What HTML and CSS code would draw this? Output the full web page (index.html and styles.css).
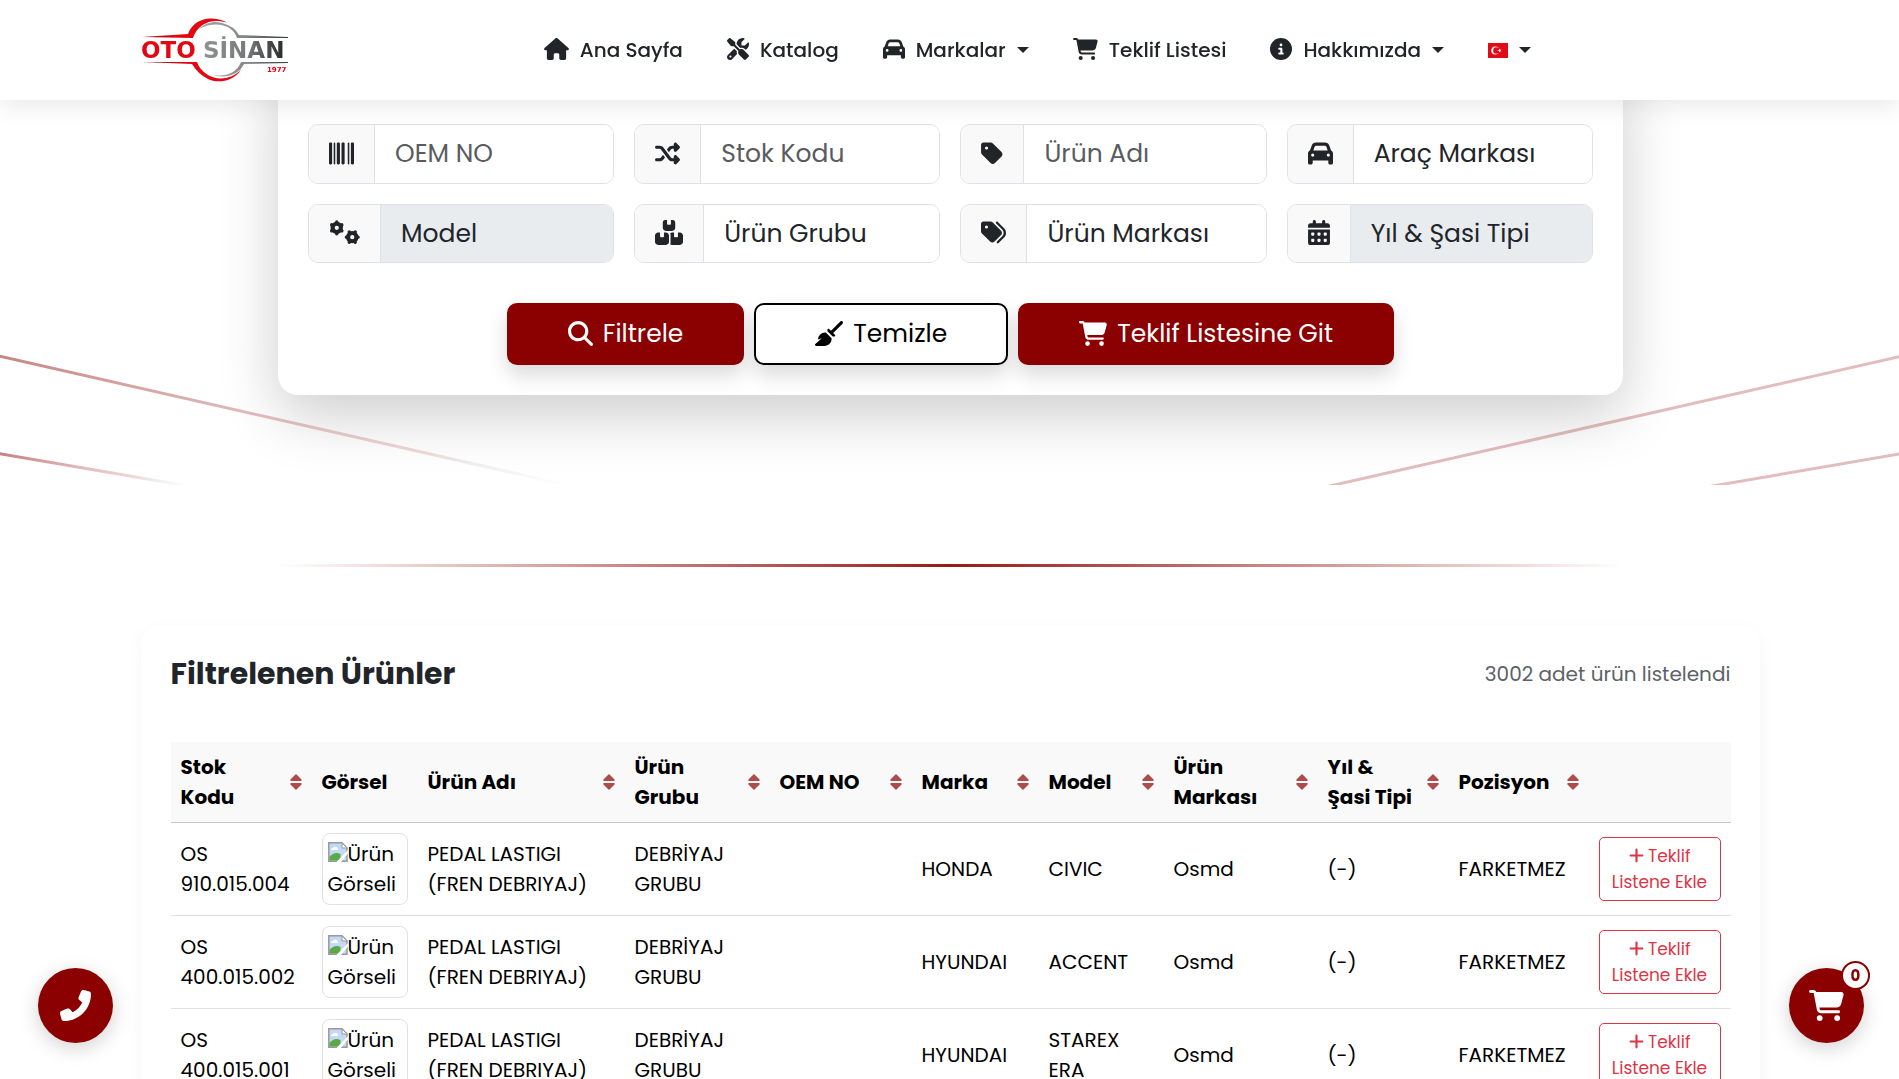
FILE: index.html
```html
<!DOCTYPE html>
<html lang="tr">
<head>
<meta charset="utf-8">
<meta name="viewport" content="width=device-width, initial-scale=1">
<title>Oto Sinan</title>
<link rel="stylesheet" href="styles.css">
</head>
<body>
<svg class="sprite" aria-hidden="true">
  <symbol id="house" viewBox="0 0 576 512"><path d="M575.8 255.5c0 18-15 32.1-32 32.1l-32 0 .7 160.2c0 2.7-.2 5.4-.5 8.1l0 16.2c0 22.1-17.9 40-40 40l-16 0c-1.1 0-2.2 0-3.3-.1c-1.4 .1-2.8 .1-4.2 .1L416 512l-24 0c-22.1 0-40-17.9-40-40l0-24 0-64c0-17.7-14.3-32-32-32l-64 0c-17.7 0-32 14.3-32 32l0 64 0 24c0 22.1-17.9 40-40 40l-24 0-31.9 0c-1.5 0-3-.1-4.5-.2c-1.2 .1-2.4 .2-3.6 .2l-16 0c-22.1 0-40-17.9-40-40l0-112c0-.9 0-1.9 .1-2.8l0-69.7-32 0c-18 0-32-14-32-32.1c0-9 3-17 10-24L266.4 8c7-7 15-8 22-8s15 2 21 7L564.8 231.5c8 7 12 15 11 24z"/></symbol>
  <symbol id="tools" viewBox="0 0 512 512"><path d="M78.6 5C69.1-2.4 55.6-1.5 47 7L7 47c-8.5 8.5-9.4 22-2.1 31.6l80 104c4.5 5.9 11.6 9.4 19 9.4l54.1 0 109 109c-14.7 29-10 65.4 14.3 89.6l112 112c12.5 12.5 32.8 12.5 45.3 0l64-64c12.5-12.5 12.5-32.8 0-45.3l-112-112c-24.2-24.2-60.6-29-89.6-14.3l-109-109 0-54.1c0-7.5-3.5-14.5-9.4-19L78.6 5zM19.9 396.1C7.2 408.8 0 426.1 0 444.1C0 481.6 30.4 512 67.9 512c18 0 35.3-7.2 48-19.9L233.7 374.3c-7.8-20.9-9-43.6-3.6-65.1l-61.7-61.7L19.9 396.1zM512 144c0-10.5-1.1-20.7-3.2-30.5c-2.4-11.2-16.1-14.1-24.2-6l-63.9 63.9c-3 3-7.1 4.7-11.3 4.7L352 176c-8.8 0-16-7.2-16-16l0-57.4c0-4.2 1.7-8.3 4.7-11.3l63.9-63.9c8.1-8.1 5.2-21.8-6-24.2C388.7 1.1 378.5 0 368 0C288.5 0 224 64.5 224 144l0 .8 85.3 85.3c36-9.1 75.8 .5 104 28.7L429 274.5c49-23 83-72.8 83-130.5zM56 432a24 24 0 1 1 48 0 24 24 0 1 1 -48 0z"/></symbol>
  <symbol id="car" viewBox="0 0 512 512"><path d="M135.2 117.4L109.1 192l293.8 0-26.1-74.6C372.3 104.6 360.2 96 346.6 96L165.4 96c-13.6 0-25.7 8.6-30.2 21.4zM39.6 196.8L74.8 96.3C88.3 57.8 124.6 32 165.4 32l181.2 0c40.8 0 77.1 25.8 90.6 64.3l35.2 100.5c23.2 9.6 39.6 32.5 39.6 59.2l0 144 0 48c0 17.7-14.3 32-32 32l-32 0c-17.7 0-32-14.3-32-32l0-48L96 400l0 48c0 17.7-14.3 32-32 32l-32 0c-17.7 0-32-14.3-32-32l0-48L0 256c0-26.7 16.4-49.6 39.6-59.2zM128 288a32 32 0 1 0 -64 0 32 32 0 1 0 64 0zm288 32a32 32 0 1 0 0-64 32 32 0 1 0 0 64z"/></symbol>
  <symbol id="cart" viewBox="0 0 576 512"><path d="M0 24C0 10.7 10.7 0 24 0L69.5 0c22 0 41.5 12.8 50.6 32l411 0c26.3 0 45.5 25 38.6 50.4l-41 152.3c-8.5 31.4-37 53.3-69.5 53.3l-288.5 0 5.4 28.5c2.2 11.3 12.1 19.5 23.6 19.5L488 336c13.3 0 24 10.7 24 24s-10.7 24-24 24l-288.3 0c-34.6 0-64.3-24.6-70.7-58.5L77.4 54.5c-.7-3.8-4-6.5-7.9-6.5L24 48C10.7 48 0 37.3 0 24zM128 464a48 48 0 1 1 96 0 48 48 0 1 1 -96 0zm336-48a48 48 0 1 1 0 96 48 48 0 1 1 0-96z"/></symbol>
  <symbol id="info" viewBox="0 0 512 512"><path d="M256 512A256 256 0 1 0 256 0a256 256 0 1 0 0 512zM216 336l24 0 0-64-24 0c-13.3 0-24-10.7-24-24s10.7-24 24-24l48 0c13.3 0 24 10.7 24 24l0 88 8 0c13.3 0 24 10.7 24 24s-10.7 24-24 24l-80 0c-13.3 0-24-10.7-24-24s10.7-24 24-24zm40-208a32 32 0 1 1 0 64 32 32 0 1 1 0-64z"/></symbol>
  <symbol id="barcode" viewBox="0 0 512 512"><path d="M24 32C10.7 32 0 42.7 0 56L0 456c0 13.3 10.7 24 24 24l16 0c13.3 0 24-10.7 24-24L64 56c0-13.3-10.7-24-24-24L24 32zm88 0c-8.8 0-16 7.2-16 16l0 416c0 8.8 7.2 16 16 16s16-7.2 16-16l0-416c0-8.8-7.2-16-16-16zm72 0c-13.3 0-24 10.7-24 24l0 400c0 13.3 10.7 24 24 24l16 0c13.3 0 24-10.7 24-24l0-400c0-13.3-10.7-24-24-24l-16 0zm96 0c-13.3 0-24 10.7-24 24l0 400c0 13.3 10.7 24 24 24l16 0c13.3 0 24-10.7 24-24l0-400c0-13.3-10.7-24-24-24l-16 0zM448 56l0 400c0 13.3 10.7 24 24 24l16 0c13.3 0 24-10.7 24-24l0-400c0-13.3-10.7-24-24-24l-16 0c-13.3 0-24 10.7-24 24zm-64-8l0 416c0 8.8 7.2 16 16 16s16-7.2 16-16l0-416c0-8.8-7.2-16-16-16s-16 7.2-16 16z"/></symbol>
  <symbol id="shuffle" viewBox="0 0 512 512"><path d="M403.8 34.4c12-5 25.7-2.2 34.9 6.9l64 64c6 6 9.4 14.1 9.4 22.6s-3.4 16.6-9.4 22.6l-64 64c-9.2 9.2-22.9 11.9-34.9 6.9s-19.8-16.6-19.8-29.6l0-32-32 0c-10.1 0-19.6 4.7-25.6 12.8L284 229.3 244 176l31.2-41.6C293.3 110.2 321.8 96 352 96l32 0 0-32c0-12.9 7.8-24.6 19.8-29.6zM164 282.7L204 336l-31.2 41.6C154.7 401.8 126.2 416 96 416l-64 0c-17.7 0-32-14.3-32-32s14.3-32 32-32l64 0c10.1 0 19.6-4.7 25.6-12.8L164 282.7zm274.6 188c-9.2 9.2-22.9 11.9-34.9 6.9s-19.8-16.6-19.8-29.6l0-32-32 0c-30.2 0-58.7-14.2-76.8-38.4L121.6 172.8c-6-8.1-15.5-12.8-25.6-12.8l-64 0c-17.7 0-32-14.3-32-32s14.3-32 32-32l64 0c30.2 0 58.7 14.2 76.8 38.4L326.4 339.2c6 8.1 15.5 12.8 25.6 12.8l32 0 0-32c0-12.9 7.8-24.6 19.8-29.6s25.7-2.2 34.9 6.9l64 64c6 6 9.4 14.1 9.4 22.6s-3.4 16.6-9.4 22.6l-64 64z"/></symbol>
  <symbol id="tag" viewBox="0 0 448 512"><path d="M0 80L0 229.5c0 17 6.7 33.3 18.7 45.3l176 176c25 25 65.5 25 90.5 0L418.7 317.3c25-25 25-65.5 0-90.5l-176-176c-12-12-28.3-18.7-45.3-18.7L48 32C21.5 32 0 53.5 0 80zm112 32a32 32 0 1 1 0 64 32 32 0 1 1 0-64z"/></symbol>
  <symbol id="tags" viewBox="0 0 512 512"><path d="M345 39.1L472.8 168.4c52.4 53 52.4 138.2 0 191.2L360.8 472.9c-9.3 9.4-24.5 9.5-33.9 .2s-9.5-24.5-.2-33.9L438.6 325.9c33.9-34.3 33.9-89.4 0-123.7L310.9 72.9c-9.3-9.4-9.2-24.6 .2-33.9s24.6-9.2 33.9 .2zM0 229.5L0 80C0 53.5 21.5 32 48 32l149.5 0c17 0 33.3 6.7 45.3 18.7l168 168c25 25 25 65.5 0 90.5L277.3 442.7c-25 25-65.5 25-90.5 0l-168-168C6.7 262.7 0 246.5 0 229.5zM144 144a32 32 0 1 0 -64 0 32 32 0 1 0 64 0z"/></symbol>
  <symbol id="gears" viewBox="0 0 640 512"><g fill="none" stroke="currentColor" stroke-linecap="round"><circle cx="160" cy="160" r="86" stroke-width="84"/><path stroke-width="70" d="M160 62V39M160 258v23M245 111l20-12M75 209l-20 12M75 111l-20-12M245 209l20 12"/><circle cx="480" cy="352" r="86" stroke-width="84"/><path stroke-width="70" d="M578 352h23M382 352h-23M529 267l12-20M431 437l-12 20M431 267l-12-20M529 437l12 20"/></g></symbol>
  <symbol id="boxes" viewBox="0 0 576 512"><path d="M248 0L208 0c-26.5 0-48 21.5-48 48l0 112c0 35.3 28.7 64 64 64l128 0c35.3 0 64-28.7 64-64l0-112c0-26.5-21.5-48-48-48L328 0l0 80c0 8.8-7.2 16-16 16l-48 0c-8.8 0-16-7.2-16-16l0-80zM64 256c-35.3 0-64 28.7-64 64L0 448c0 35.3 28.7 64 64 64l160 0c35.3 0 64-28.7 64-64l0-128c0-35.3-28.7-64-64-64l-40 0 0 80c0 8.8-7.2 16-16 16l-48 0c-8.8 0-16-7.2-16-16l0-80-40 0zM352 512l160 0c35.3 0 64-28.7 64-64l0-128c0-35.3-28.7-64-64-64l-40 0 0 80c0 8.8-7.2 16-16 16l-48 0c-8.8 0-16-7.2-16-16l0-80-40 0c-15 0-28.8 5.1-39.7 13.8c4.9 10.4 7.7 22 7.7 34.2l0 160c0 12.2-2.8 23.8-7.7 34.2C323.2 506.9 337 512 352 512z"/></symbol>
  <symbol id="calendar" viewBox="0 0 448 512"><path fill-rule="evenodd" d="M128 0c17.7 0 32 14.3 32 32l0 32 128 0 0-32c0-17.7 14.3-32 32-32s32 14.3 32 32l0 32 48 0c26.5 0 48 21.5 48 48l0 48L0 160l0-48C0 85.5 21.5 64 48 64l48 0 0-32c0-17.7 14.3-32 32-32zM0 192l448 0 0 272c0 26.5-21.5 48-48 48L48 512c-26.5 0-48-21.5-48-48zM80 256q-16 0-16 16v32q0 16 16 16h32q16 0 16-16v-32q0-16-16-16zM208 256q-16 0-16 16v32q0 16 16 16h32q16 0 16-16v-32q0-16-16-16zM336 256q-16 0-16 16v32q0 16 16 16h32q16 0 16-16v-32q0-16-16-16zM80 384q-16 0-16 16v32q0 16 16 16h32q16 0 16-16v-32q0-16-16-16zM208 384q-16 0-16 16v32q0 16 16 16h32q16 0 16-16v-32q0-16-16-16zM336 384q-16 0-16 16v32q0 16 16 16h32q16 0 16-16v-32q0-16-16-16z"/></symbol>
  <symbol id="search" viewBox="0 0 512 512"><path d="M416 208c0 45.9-14.9 88.3-40 122.7L502.6 457.4c12.5 12.5 12.5 32.8 0 45.3s-32.8 12.5-45.3 0L330.7 376c-34.4 25.2-76.8 40-122.7 40C93.1 416 0 322.9 0 208S93.1 0 208 0S416 93.1 416 208zM208 352a144 144 0 1 0 0-288 144 144 0 1 0 0 288z"/></symbol>
  <symbol id="broom" viewBox="0 0 576 512"><path d="M566.6 54.6c12.5-12.5 12.5-32.8 0-45.3s-32.8-12.5-45.3 0l-192 192-34.7-34.7c-4.2-4.2-10-6.6-16-6.6c-12.5 0-22.6 10.1-22.6 22.6l0 29.1L364.3 320l29.1 0c12.5 0 22.6-10.1 22.6-22.6c0-6-2.4-11.8-6.6-16l-34.7-34.7 192-192zM341.1 353.4L222.6 234.9c-42.7-3.7-85.2 11.7-115.8 42.3l-8 8C76.5 307.5 64 337.7 64 369.2c0 6.8 7.1 11.2 13.2 8.2l51.1-25.5c5-2.5 9.5 4.1 5.4 7.9L7.3 473.4C2.7 477.6 0 483.6 0 489.9C0 502.1 9.9 512 22.1 512l173.3 0c38.8 0 75.9-15.4 103.4-42.8c30.6-30.6 45.9-73.1 42.3-115.8z"/></symbol>
  <symbol id="plus" viewBox="0 0 448 512"><path d="M256 80c0-17.7-14.3-32-32-32s-32 14.3-32 32l0 144L48 224c-17.7 0-32 14.3-32 32s14.3 32 32 32l144 0 0 144c0 17.7 14.3 32 32 32s32-14.3 32-32l0-144 144 0c17.7 0 32-14.3 32-32s-14.3-32-32-32l-144 0 0-144z"/></symbol>
  <symbol id="phone" viewBox="0 0 512 512"><path transform="matrix(-1 0 0 1 512 0)" d="M164.9 24.6c-7.7-18.6-28-28.5-47.4-23.2l-88 24C12.1 30.2 0 46 0 64C0 311.4 200.6 512 448 512c18 0 33.8-12.1 38.6-29.5l24-88c5.3-19.4-4.6-39.7-23.2-47.4l-96-40c-16.3-6.8-35.2-2.1-46.3 11.6L304.7 368C234.3 334.7 177.3 277.7 144 207.3L193.3 167c13.7-11.2 18.4-30 11.6-46.3l-40-96z"/></symbol>
  <symbol id="sort" viewBox="0 0 12 16"><path d="M6 0L11.6 5.6Q12 7 11 7H1Q0 7 .4 5.6ZM6 16L11.6 10.4Q12 9 11 9H1Q0 9 .4 10.4Z"/></symbol>
  <symbol id="broken" viewBox="0 0 20 20"><path fill="#c3d9f7" stroke="#9a9a9a" stroke-width="1.5" d="M.8.8H14L19 6V19.2H.8Z"/><path fill="#fff" stroke="#9a9a9a" d="M14 1V6H19Z"/><path fill="#fff" d="M3 8q0-2 2-2 1-2 3-1 2 0 2 3Z"/><path fill="#5aa846" d="M1.5 18.5V15q5-6 11-3v6.5Z"/><path fill="#fff" d="M8 20.5 20.5 7.5V11L12.5 20.5Z"/></symbol>
</svg>

<header class="topbar">
  <div class="topbar-inner">
    <a class="logo" href="#" aria-label="Oto Sinan">
      <svg viewBox="0 0 150 66" width="150" height="66">
        <defs>
          <linearGradient id="lg-red"><stop offset="0" stop-color="#8a1018"/><stop offset=".4" stop-color="#e30613"/></linearGradient>
          <linearGradient id="lg-grey"><stop offset="0" stop-color="#a5a7a8"/><stop offset=".5" stop-color="#858788"/><stop offset="1" stop-color="#3b3e40"/></linearGradient>
          <linearGradient id="lg-name"><stop offset="0" stop-color="#8f9192"/><stop offset=".55" stop-color="#77797b"/><stop offset="1" stop-color="#26292b"/></linearGradient>
        </defs>
        <path fill="url(#lg-red)" d="M1 20 47 17C51 6 61 1 71 1.500Q80 2 86 5.500C71 1 57 6 52 21Z"/>
        <path fill="url(#lg-grey)" d="M58 12C65 5 74 4 81 6Q93 9 98 18L147 20V21H96C92 8 75 3 58 12Z"/>
        <path fill="url(#lg-red)" d="M1 45H56C61 60 83 69 100 53 91 66 75 66 67 62Q57 57 51 47Z"/>
        <path fill="url(#lg-grey)" d="M147 45H100C95 57 83 61 68 57 81 62 97 60 103 47L147 46Z"/>
        <g font-family="DejaVu Sans" font-weight="bold">
          <text x="0" y="41" font-size="23" fill="#e30613">OTO</text>
          <text x="62" y="41" font-size="23" fill="url(#lg-name)">SİNAN</text>
          <text x="126" y="55" font-size="7" fill="#e30613">1977</text>
        </g>
      </svg>
    </a>
    <nav class="menu" aria-label="Ana menü">
      <a href="#"><svg class="i20 w9"><use href="#house"/></svg>Ana Sayfa</a>
      <a href="#"><svg class="i20"><use href="#tools"/></svg>Katalog</a>
      <a href="#" class="drop"><svg class="i20"><use href="#car"/></svg>Markalar</a>
      <a href="#"><svg class="i20 w9"><use href="#cart"/></svg>Teklif Listesi</a>
      <a href="#" class="drop"><svg class="i20"><use href="#info"/></svg>Hakkımızda</a>
      <a href="#" class="drop" aria-label="Türkçe"><svg class="flag" viewBox="0 0 20 15"><path fill="#e30a17" d="M0 0h20v15H0z"/><circle cx="7.3" cy="7.5" r="4" fill="#fff"/><circle cx="8.4" cy="7.5" r="3.2" fill="#e30a17"/><path fill="#fff" d="m9.300 7.500 1.700-.5.1-1.400 1 1.100 1.300-.4-.7 1.200.7 1.200-1.300-.4-1 1.100-.1-1.400z"/></svg></a>
    </nav>
  </div>
</header>

<main>
  <section class="hero">
    <svg class="rays" viewBox="0 0 1899 130" preserveAspectRatio="none" aria-hidden="true">
      <defs>
        <linearGradient id="ray-a" gradientUnits="userSpaceOnUse" x1="0" y1="0" x2="565" y2="0"><stop offset="0" stop-color="#8b0000" stop-opacity=".48"/><stop offset=".75" stop-color="#b04040" stop-opacity=".2"/><stop offset=".82" stop-color="#777" stop-opacity=".14"/><stop offset="1" stop-color="#888" stop-opacity="0"/></linearGradient>
        <linearGradient id="ray-b" gradientUnits="userSpaceOnUse" x1="0" y1="0" x2="190" y2="0"><stop offset="0" stop-color="#8b0000" stop-opacity=".5"/><stop offset=".72" stop-color="#b04040" stop-opacity=".2"/><stop offset=".8" stop-color="#777" stop-opacity=".14"/><stop offset="1" stop-color="#888" stop-opacity="0"/></linearGradient>
      </defs>
      <g fill="none" stroke-width="3">
        <path stroke="url(#ray-a)" d="M-10-1 580 133"/>
        <path stroke="url(#ray-b)" d="M-10 97 200 133"/>
        <path stroke="#8b0000" stroke-opacity=".26" d="M1911-1 1321 133M1911 97 1701 133"/>
      </g>
    </svg>
    <form class="search-card">
      <div class="fields">
        <div class="field"><label for="oem" aria-label="OEM NO"><svg class="i25"><use href="#barcode"/></svg></label><input id="oem" type="text" placeholder="OEM NO"></div>
        <div class="field"><label for="stok" aria-label="Stok Kodu"><svg class="i25"><use href="#shuffle"/></svg></label><input id="stok" type="text" placeholder="Stok Kodu"></div>
        <div class="field"><label for="ad" aria-label="Ürün Adı"><svg class="i25 w7"><use href="#tag"/></svg></label><input id="ad" type="text" placeholder="Ürün Adı"></div>
        <div class="field"><label for="arac" aria-label="Araç Markası"><svg class="i25"><use href="#car"/></svg></label><select id="arac"><option>Araç Markası</option></select></div>
        <div class="field"><label for="model" aria-label="Model"><svg class="i25 w10"><use href="#gears"/></svg></label><select id="model" disabled><option>Model</option></select></div>
        <div class="field"><label for="grup" aria-label="Ürün Grubu"><svg class="i25 w9"><use href="#boxes"/></svg></label><select id="grup"><option>Ürün Grubu</option></select></div>
        <div class="field"><label for="marka" aria-label="Ürün Markası"><svg class="i25"><use href="#tags"/></svg></label><select id="marka"><option>Ürün Markası</option></select></div>
        <div class="field"><label for="yil" aria-label="Yıl &amp; Şasi Tipi"><svg class="i25 w7"><use href="#calendar"/></svg></label><select id="yil" disabled><option>Yıl &amp; Şasi Tipi</option></select></div>
      </div>
      <div class="actions">
        <button type="submit" class="btn red"><svg class="i25"><use href="#search"/></svg>Filtrele</button>
        <button type="reset" class="btn plain"><svg class="i25 w9"><use href="#broom"/></svg>Temizle</button>
        <a href="#" class="btn red"><svg class="i25 w9"><use href="#cart"/></svg>Teklif Listesine Git</a>
      </div>
    </form>
  </section>

  <hr class="divider">

  <section class="results">
    <div class="results-head">
      <h2>Filtrelenen Ürünler</h2>
      <p>3002 adet ürün listelendi</p>
    </div>
    <table>
      <colgroup><col class="c-stok"><col class="c-img"><col class="c-ad"><col class="c-grup"><col class="c-oem"><col class="c-marka"><col class="c-model"><col class="c-umarka"><col class="c-yil"><col class="c-poz"><col class="c-btn"></colgroup>
      <thead>
        <tr>
          <th><div>Stok<br>Kodu<svg class="sort"><use href="#sort"/></svg></div></th>
          <th><div>Görsel</div></th>
          <th><div>Ürün Adı<svg class="sort"><use href="#sort"/></svg></div></th>
          <th><div>Ürün<br>Grubu<svg class="sort"><use href="#sort"/></svg></div></th>
          <th><div>OEM NO<svg class="sort"><use href="#sort"/></svg></div></th>
          <th><div>Marka<svg class="sort"><use href="#sort"/></svg></div></th>
          <th><div>Model<svg class="sort"><use href="#sort"/></svg></div></th>
          <th><div>Ürün<br>Markası<svg class="sort"><use href="#sort"/></svg></div></th>
          <th><div>Yıl &amp;<br>Şasi Tipi<svg class="sort"><use href="#sort"/></svg></div></th>
          <th><div>Pozisyon<svg class="sort"><use href="#sort"/></svg></div></th>
          <th></th>
        </tr>
      </thead>
      <tbody>
        <tr>
          <td>OS<br>910.015.004</td>
          <td><div class="thumb"><svg><use href="#broken"/></svg>Ürün Görseli</div></td>
          <td>PEDAL LASTIGI<br>(FREN DEBRIYAJ)</td>
          <td>DEBRİYAJ GRUBU</td><td></td><td>HONDA</td><td>CIVIC</td><td>Osmd</td><td>(-)</td><td>FARKETMEZ</td>
          <td><button type="button" class="add"><svg><use href="#plus"/></svg> Teklif<br>Listene Ekle</button></td>
        </tr>
        <tr>
          <td>OS<br>400.015.002</td>
          <td><div class="thumb"><svg><use href="#broken"/></svg>Ürün Görseli</div></td>
          <td>PEDAL LASTIGI<br>(FREN DEBRIYAJ)</td>
          <td>DEBRİYAJ GRUBU</td><td></td><td>HYUNDAI</td><td>ACCENT</td><td>Osmd</td><td>(-)</td><td>FARKETMEZ</td>
          <td><button type="button" class="add"><svg><use href="#plus"/></svg> Teklif<br>Listene Ekle</button></td>
        </tr>
        <tr>
          <td>OS<br>400.015.001</td>
          <td><div class="thumb"><svg><use href="#broken"/></svg>Ürün Görseli</div></td>
          <td>PEDAL LASTIGI<br>(FREN DEBRIYAJ)</td>
          <td>DEBRİYAJ GRUBU</td><td></td><td>HYUNDAI</td><td>STAREX ERA</td><td>Osmd</td><td>(-)</td><td>FARKETMEZ</td>
          <td><button type="button" class="add"><svg><use href="#plus"/></svg> Teklif<br>Listene Ekle</button></td>
        </tr>
      </tbody>
    </table>
  </section>
</main>

<a href="#" class="fab call" aria-label="Ara"><svg><use href="#phone"/></svg></a>
<a href="#" class="fab basket" aria-label="Teklif Listesi"><svg><use href="#cart"/></svg><span class="badge">0</span></a>
</body>
</html>
```
FILE: styles.css
```css
* { box-sizing: border-box; }

body {
  margin: 0;
  background: #fff;
  color: #212529;
  font: 400 20px/30px Poppins, Inter, "Open Sans", sans-serif;
}

a { color: inherit; text-decoration: none; }
svg { fill: currentColor; flex: none; }
.sprite { display: none; }

.i20 { width: 22px; height: 22px; margin-bottom: 2px; }
.i20.w9 { width: 25px; }
.i25 { width: 25px; height: 25px; margin-bottom: 2px; }
.i25.w7 { width: 22px; }
.i25.w9 { width: 28px; }
.i25.w10 { width: 31px; }

/* Top bar */
.topbar {
  position: fixed;
  inset: 0 0 auto;
  z-index: 10;
  height: 100px;
  background: #fff;
  box-shadow: 0 4px 25px rgba(0, 0, 0, .1);
}
.topbar-inner {
  display: flex;
  align-items: center;
  height: 100%;
  margin: 0 7.3% 0 7.4%;
}
.logo, .logo svg { display: block; }
.menu {
  display: flex;
  flex: 1;
  justify-content: center;
  gap: 44px;
  padding-left: 24px;
  font-weight: 500;
}
.menu a {
  display: flex;
  align-items: center;
  gap: 11px;
}
.drop::after {
  content: "";
  border: 6px solid transparent;
  border-top-color: currentColor;
  border-bottom: 0;
}
.flag { width: 20px; height: 15px; }

/* Search form */
.hero {
  position: relative;
  overflow: hidden;
  padding: 60px 14.54% 90px 14.64%;
}
.rays {
  position: absolute;
  left: 0;
  bottom: 0;
  width: 100%;
  height: 130px;
}
.search-card {
  padding: 64px 30px 30px;
  border-radius: 20px;
  background: #fff;
  box-shadow: 0 20px 60px rgba(0, 0, 0, .2);
}
.fields {
  display: grid;
  grid-template-columns: repeat(4, 1fr);
  grid-template-rows: 60px 59px;
  gap: 20px;
}
.field {
  display: flex;
  overflow: hidden;
  border: 1px solid #dee2e6;
  border-radius: 10px;
}
.field label {
  display: flex;
  align-items: center;
  padding: 0 20px;
  border-right: 1px solid #dee2e6;
  background: #f9f9f9;
}
.field input, .field select {
  flex: 1;
  min-width: 0;
  padding: 0 20px;
  border: 0;
  outline: 0;
  appearance: none;
  background: #fff;
  color: #212529;
  font: inherit;
  font-size: 25px;
}
.field input::placeholder { color: #595c5f; opacity: 1; }
.field select:disabled { background: #e9ecef; opacity: 1; }

.actions {
  display: flex;
  justify-content: center;
  gap: 10px;
  margin-top: 40px;
}
.btn {
  display: flex;
  align-items: center;
  gap: 10px;
  height: 62px;
  padding: 0 59px;
  border: 2px solid #8b0000;
  border-radius: 10px;
  box-shadow: 0 10px 20px rgba(0, 0, 0, .15);
  font: inherit;
  font-size: 25px;
}
.btn.red { background: #8b0000; color: #fff; }
.btn.plain { border-color: #000; background: #fff; color: #000; }

.divider {
  height: 3px;
  margin: 79px 14.54% 58px 14.64%;
  border: 0;
  background: linear-gradient(90deg, transparent, #8b0000, transparent);
  opacity: .9;
}

/* Product list */
.results {
  margin: 0 7.3% 60px 7.4%;
  padding: 30px;
  border-radius: 20px;
  background: #fff;
  box-shadow: 0 5px 20px rgba(0, 0, 0, .04);
}
.results-head {
  display: flex;
  align-items: center;
  justify-content: space-between;
  height: 37px;
  margin-bottom: 50px;
}
h2 { margin: 0; font-size: 30px; font-weight: 700; }
.results-head p { margin: 0; color: #5c6268; }

table {
  width: 100%;
  border-collapse: separate;
  border-spacing: 0;
  table-layout: fixed;
  color: #000;
}
.c-stok { width: 141px; }
.c-img { width: 106px; }
.c-ad { width: 207px; }
.c-grup { width: 145px; }
.c-oem { width: 142px; }
.c-marka { width: 127px; }
.c-model { width: 125px; }
.c-umarka { width: 154px; }
.c-yil { width: 131px; }
.c-poz { width: 140px; }
.c-btn { width: 142px; }

th {
  padding: 10px;
  border-bottom: 1px solid #c6c7c8;
  background: #f9f9f9;
  font-weight: 700;
  text-align: left;
}
th div {
  position: relative;
  white-space: nowrap;
}
.sort {
  position: absolute;
  top: calc(50% - 8px);
  right: 0;
  width: 12px;
  height: 16px;
  color: #ae4c4c;
}
td {
  padding: 10px;
  border-bottom: 1px solid #dee2e6;
  vertical-align: middle;
}
.thumb {
  height: 72px;
  padding: 5px;
  border: 1px solid #dee2e6;
  border-radius: 8px;
}
.thumb svg { width: 20px; height: 20px; vertical-align: -1px; }

.add {
  width: 100%;
  padding: 5px 0;
  border: 1px solid #dc3545;
  border-radius: 5px;
  background: #fff;
  color: #dc3545;
  font: inherit;
  font-size: 17px;
  line-height: 26px;
}
.add svg { width: 15px; height: 17px; vertical-align: -2px; }

/* Floating buttons */
.fab {
  position: fixed;
  bottom: 36px;
  z-index: 5;
  display: grid;
  place-items: center;
  width: 75px;
  height: 75px;
  border-radius: 50%;
  background: #8b0000;
  box-shadow: 0 5px 20px rgba(0, 0, 0, .18);
  color: #fff;
}
.call { left: 38px; }
.call svg { width: 31px; height: 31px; }
.basket { right: 35px; }
.basket svg { width: 35px; height: 31px; }
.badge {
  position: absolute;
  top: -7px;
  right: -6px;
  width: 29px;
  height: 29px;
  border: 2px solid #8b0000;
  border-radius: 50%;
  background: #fff;
  color: #8b0000;
  font-size: 15px;
  font-weight: 700;
  line-height: 25px;
  text-align: center;
}
```
